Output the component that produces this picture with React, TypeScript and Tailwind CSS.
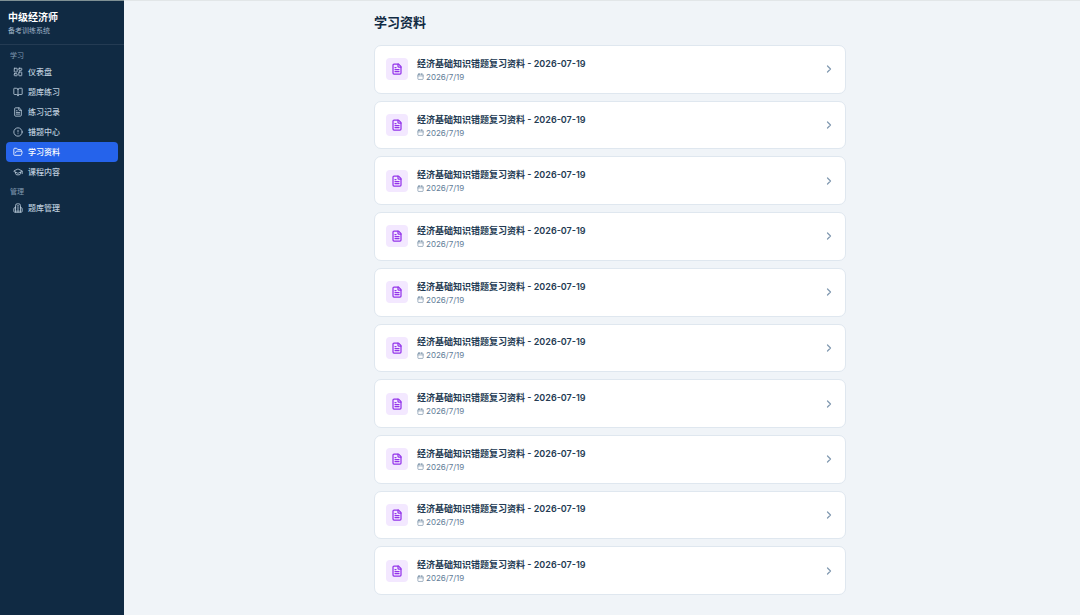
import React from "react";
import type { ComponentType } from "react";
import {
  BookOpen,
  Calendar,
  ChevronRight,
  CircleAlert,
  FileText,
  FolderOpen,
  GraduationCap,
  LayoutDashboard,
} from "lucide-react";

type NavItem = {
  label: string;
  icon: ComponentType<{ className?: string }>;
  active?: boolean;
};

function InstituteIcon({ className }: { className?: string }) {
  return (
    <svg
      className={className}
      viewBox="0 0 24 24"
      fill="none"
      stroke="currentColor"
      strokeWidth="2"
      strokeLinecap="round"
      strokeLinejoin="round"
      aria-hidden="true"
    >
      <path d="M6 22V6a4 4 0 0 1 4-4h4a4 4 0 0 1 4 4v16" />
      <path d="M6 11H5a3 3 0 0 0-3 3v6a2 2 0 0 0 2 2h16a2 2 0 0 0 2-2v-6a3 3 0 0 0-3-3h-1" />
      <path d="M10 7h4M10 12h4" />
      <path d="M10 22v-4a2 2 0 0 1 4 0v4" />
    </svg>
  );
}

const groups: { title: string; items: NavItem[] }[] = [
  {
    title: "学习",
    items: [
      { label: "仪表盘", icon: LayoutDashboard },
      { label: "题库练习", icon: BookOpen },
      { label: "练习记录", icon: FileText },
      { label: "错题中心", icon: CircleAlert },
      { label: "学习资料", icon: FolderOpen, active: true },
      { label: "课程内容", icon: GraduationCap },
    ],
  },
  { title: "管理", items: [{ label: "题库管理", icon: InstituteIcon }] },
];

const materials = Array.from({ length: 10 }, (_, id) => ({
  id,
  title: "经济基础知识错题复习资料 - 2026-07-19",
  date: "2026/7/19",
}));

function Sidebar() {
  return (
    <aside className="w-[124px] shrink-0 border-t border-[#7f9094] bg-[#102a43] text-[#bcccdc]">
      <header className="border-b border-[#243b53] px-2 pt-[9px] pb-[7px]">
        <p className="text-[10px] leading-[14px] font-bold text-white">中级经济师</p>
        <p className="text-[7px] leading-[13px] text-[#9fb3c8]">备考训练系统</p>
      </header>
      <nav className="flex flex-col gap-[3px] px-1.5 pt-1">
        {groups.map((group) => (
          <section key={group.title}>
            <h2 className="px-1 text-[7px] leading-[13px] text-[#829ab1]">{group.title}</h2>
            {group.items.map(({ label, icon: Icon, active }) => (
              <a
                key={label}
                href="#"
                className={`flex h-5 items-center gap-[5px] rounded px-[7px] text-[8px] font-medium ${
                  active ? "bg-[#2563eb] text-white" : "text-[#bcccdc]"
                }`}
              >
                <Icon className="size-2.5" />
                {label}
              </a>
            ))}
          </section>
        ))}
      </nav>
    </aside>
  );
}

export default function App() {
  return (
    <div className="flex min-h-screen bg-[#f0f4f8] font-['Inter','Noto_Sans_CJK_SC',sans-serif]">
      <Sidebar />
      <main className="flex flex-1 flex-col border-t border-[#e2e6e8] pt-[11px] pr-4 pb-5 pl-8">
        <div className="mx-auto flex w-full max-w-[472px] flex-1 flex-col">
          <h1 className="mb-[13px] text-[13px] leading-5 font-bold text-[#102a43]">学习资料</h1>
          <ul className="flex flex-1 flex-col gap-[7px]">
            {materials.map((item) => (
              <li key={item.id} className="flex flex-1">
                <button
                  type="button"
                  className="flex flex-1 items-center gap-[9px] rounded-[7px] border border-[#dfe7ef] bg-white pr-2.5 pl-[11px] text-left"
                >
                  <span className="flex size-[22px] items-center justify-center rounded bg-[#f3e8ff] text-[#9333ea]">
                    <FileText className="size-3" strokeWidth={2.5} />
                  </span>
                  <span className="flex flex-1 flex-col pt-px">
                    <span className="text-[9px] leading-[14px] font-semibold text-[#243b53]">{item.title}</span>
                    <span className="flex items-center gap-0.5 text-[8px] leading-3 text-[#627d98]">
                      <Calendar className="size-[7px]" />
                      {item.date}
                    </span>
                  </span>
                  <ChevronRight className="size-3 text-[#829ab1]" strokeWidth={2.5} />
                </button>
              </li>
            ))}
          </ul>
        </div>
      </main>
    </div>
  );
}
